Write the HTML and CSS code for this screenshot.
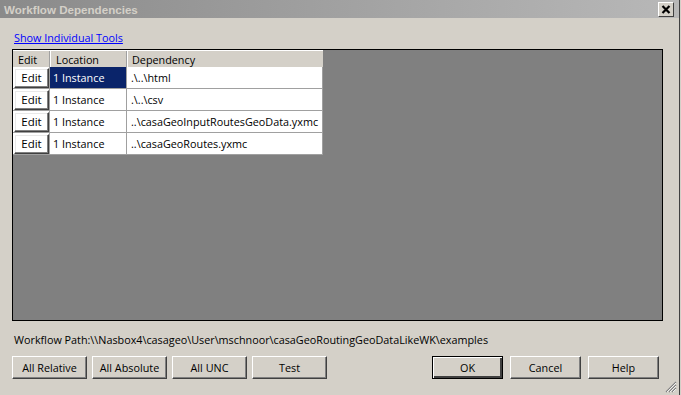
FILE: index.html
```html
<!DOCTYPE html>
<html>
<head>
<meta charset="utf-8">
<link rel="stylesheet" href="styles.css">
</head>
<body>
<div class="window">
  <div class="titlebar">
    <span class="title">Workflow Dependencies</span>
    <span class="close"><svg width="10" height="9" viewBox="0 0 10 9"><path d="M1.5 1 L8.5 8 M8.5 1 L1.5 8" stroke="#000" stroke-width="2.2" fill="none"/></svg></span>
  </div>
  <div class="content">
    <a class="link" href="#">Show Individual Tools</a>
    <div class="gridbox">
      <div class="table">
        <div class="row head">
          <div class="c c1">Edit</div>
          <div class="c c2">Location</div>
          <div class="c c3">Dependency</div>
        </div>
        <div class="row">
          <div class="c c1"><span class="ebtn">Edit</span></div>
          <div class="c c2 sel">1 Instance</div>
          <div class="c c3">.\..\html</div>
        </div>
        <div class="row">
          <div class="c c1"><span class="ebtn">Edit</span></div>
          <div class="c c2">1 Instance</div>
          <div class="c c3">.\..\csv</div>
        </div>
        <div class="row">
          <div class="c c1"><span class="ebtn">Edit</span></div>
          <div class="c c2">1 Instance</div>
          <div class="c c3">..\casaGeoInputRoutesGeoData.yxmc</div>
        </div>
        <div class="row">
          <div class="c c1"><span class="ebtn">Edit</span></div>
          <div class="c c2">1 Instance</div>
          <div class="c c3">..\casaGeoRoutes.yxmc</div>
        </div>
      </div>
    </div>
    <div class="path">Workflow Path:\\Nasbox4\casageo\User\mschnoor\casaGeoRoutingGeoDataLikeWK\examples</div>
    <div class="buttons">
      <div class="group">
        <span class="btn">All Relative</span>
        <span class="btn">All Absolute</span>
        <span class="btn">All UNC</span>
        <span class="btn">Test</span>
      </div>
      <div class="group right">
        <span class="btn def">OK</span>
        <span class="btn">Cancel</span>
        <span class="btn">Help</span>
      </div>
    </div>
  </div>
  <div class="grip"><svg width="12" height="12" viewBox="0 0 12 12"><path d="M11 1 L1 11 M11 4 L4 11 M11 7 L7 11" stroke="#808080" stroke-width="1.2" fill="none"/><path d="M11 2 L2 11 M11 5 L5 11 M11 8 L8 11" stroke="#fff" stroke-width="0.8" fill="none"/></svg></div>
</div>
<div class="edge"></div>
</body>
</html>
```
FILE: styles.css
```css
html, body {
  margin: 0;
  padding: 0;
  width: 681px;
  height: 395px;
  overflow: hidden;
  background: #d4d0c8;
}
body {
  display: flex;
  font-family: "Open Sans", "Liberation Sans", sans-serif;
  font-size: 10.8px;
  color: #000;
}
.window {
  position: relative;
  width: 679px;
  height: 395px;
  background: #d4d0c8;
  display: flex;
  flex-direction: column;
}
.edge {
  width: 1px;
  height: 395px;
  background: #404040;
}
.titlebar {
  height: 18px;
  display: flex;
  align-items: center;
  justify-content: space-between;
  padding: 0 5px 0 4px;
  background: linear-gradient(to right, #8a8a8a, #b8b8b8);
}
.title {
  font-family: "Liberation Sans", Arial, sans-serif;
  font-weight: bold;
  font-size: 11.6px;
  color: #d4d0c8;
}
.close {
  width: 14px;
  height: 13px;
  background: #d4d0c8;
  border: 1px solid;
  border-color: #fff #404040 #404040 #fff;
  display: flex;
  align-items: center;
  justify-content: center;
}
.content {
  display: flex;
  flex-direction: column;
  padding: 12px 0 0 12px;
}
.link {
  margin-left: 2px;
  color: #0000ff;
  text-decoration: underline;
  height: 19px;
  line-height: 15px;
}
.gridbox {
  width: 649px;
  height: 270px;
  border: 1px solid #000;
  background: #808080;
}
.table {
  display: flex;
  flex-direction: column;
  width: 310px;
}
.row {
  display: flex;
  height: 21px;
  background: #fff;
  border-bottom: 1px solid #a0a0a0;
}
.row.head {
  height: 16px;
  background: #d4d0c8;
  border-top: 1px solid #fff;
  border-bottom: none;
}
.c {
  display: flex;
  align-items: center;
  padding-left: 3px;
  border-right: 1px solid #a0a0a0;
  box-sizing: border-box;
  white-space: nowrap;
}
.c1 { width: 37px; padding-left: 1px; }
.c2 { width: 77px; }
.c3 { width: 196px; padding-left: 4px; }
.head .c {
  border-right: 1px solid #a0a0a0;
  box-shadow: 1px 0 0 #fff;
  padding-left: 5px;
}
.head .c1 { padding-left: 5px; }
.head .c2 { padding-left: 6px; }
.head .c3 { padding-left: 5px; border-right: none; box-shadow: none; }
.sel {
  background: #0a246a;
  color: #fff;
}
.ebtn {
  width: 35px;
  height: 20px;
  box-sizing: border-box;
  background: #fff;
  border: 1px solid;
  border-color: #fff #404040 #404040 #fff;
  box-shadow: inset -1px -1px 0 #808080, inset 1px 1px 0 #e8e8e8;
  display: flex;
  align-items: center;
  justify-content: center;
  font-size: 11.5px;
}
.path {
  margin-top: 12px;
  margin-left: 2px;
  height: 14px;
  line-height: 14px;
}
.buttons {
  display: flex;
  justify-content: space-between;
  margin-top: 9px;
  width: 647px;
}
.group {
  display: flex;
  gap: 5px;
}
.group.right { gap: 7px; }
.btn {
  width: 75px;
  height: 23px;
  box-sizing: border-box;
  background: #d4d0c8;
  border: 1px solid;
  border-color: #fff #404040 #404040 #fff;
  box-shadow: inset -1px -1px 0 #808080;
  display: flex;
  align-items: center;
  justify-content: center;
}
.right .btn { width: 71px; }
.btn.def {
  border: 1px solid #000;
  box-shadow: inset 1px 1px 0 #fff, inset -2px -2px 0 #404040, inset -1px -1px 0 #808080;
}
.grip {
  position: absolute;
  right: 2px;
  bottom: 2px;
  width: 12px;
  height: 12px;
}
```
